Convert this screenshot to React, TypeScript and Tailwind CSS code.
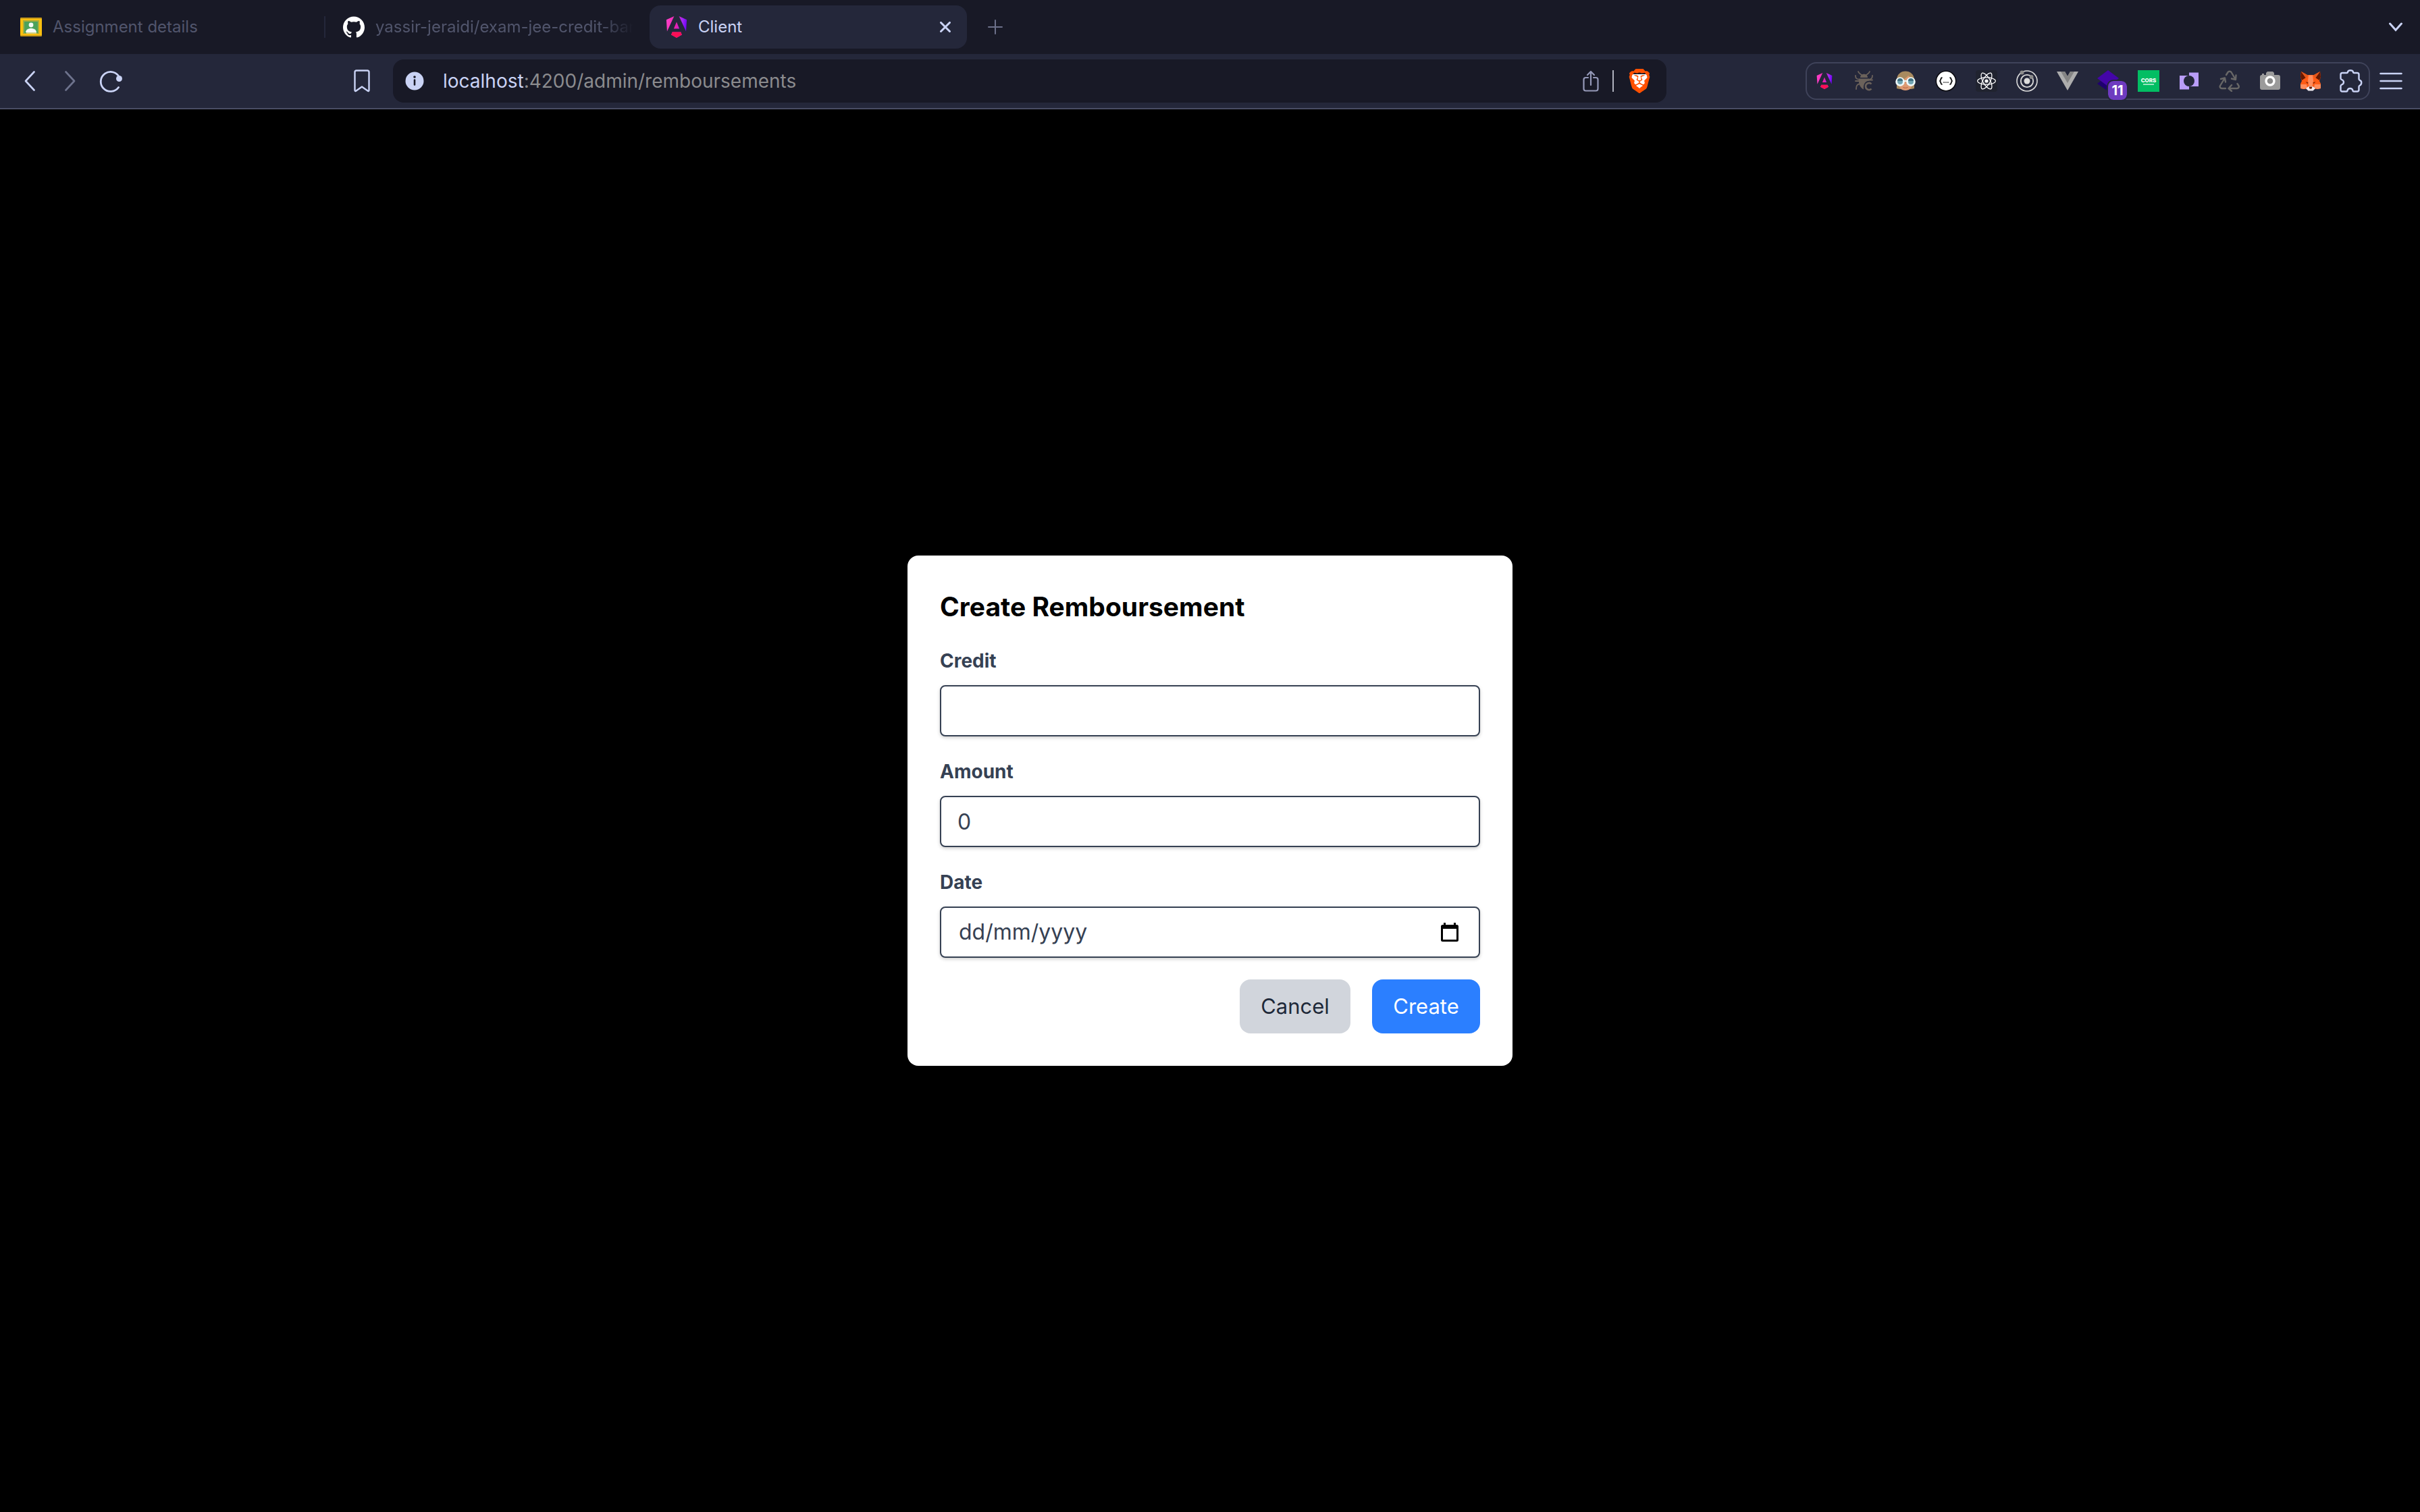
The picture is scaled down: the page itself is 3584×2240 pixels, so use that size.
import type { ReactNode } from "react";
import { SiBrave, SiGithub, SiReact } from "react-icons/si";

const ANGULAR_PATH =
  "M16.712 17.711H7.288l-1.204 2.916L12 24l5.916-3.373-1.204-2.916ZM14.692 0l7.832 16.855.814-12.856L14.692 0ZM9.308 0 .662 3.999l.814 12.856L9.308 0Zm-.405 13.93h6.198L12 6.396 8.903 13.93Z";

function AngularIcon({ id, className }: { id: string; className: string }) {
  return (
    <svg viewBox="0 0 24 24" className={className} aria-hidden="true">
      <defs>
        <linearGradient id={id} x1="0" y1="0.3" x2="1" y2="0.45">
          <stop offset="0" stopColor="#ff41c8" />
          <stop offset="0.5" stopColor="#e81fb0" />
          <stop offset="0.75" stopColor="#a32af5" />
          <stop offset="1" stopColor="#6a00f4" />
        </linearGradient>
      </defs>
      <path d={ANGULAR_PATH} fill={`url(#${id})`} />
      <path d="M16.712 17.711H7.288l-1.204 2.916L12 24l5.916-3.373-1.204-2.916Z" fill="#fb0f55" />
    </svg>
  );
}

function ClassroomIcon() {
  return (
    <svg viewBox="0 0 32 28" className="h-7 w-8 shrink-0" aria-hidden="true">
      <rect width="32" height="28" rx="1" fill="#c79a1a" />
      <rect y="2" width="32" height="24" fill="#fbc010" />
      <rect x="4" y="4" width="24" height="20" fill="#a9ad3c" />
      <rect x="6" y="6" width="20" height="17" fill="#4ca25c" />
      <circle cx="16" cy="11" r="3.4" fill="#f4faf5" />
      <path d="M8 22c0-4 4-6 8-6s8 2 8 6z" fill="#f4faf5" />
      <rect x="9" y="22" width="15" height="2" fill="#cfcf88" />
    </svg>
  );
}

function BugIcon() {
  return (
    <svg viewBox="0 0 32 32" className="size-8" fill="none" stroke="#6b625b" strokeWidth="1.8" strokeLinecap="round" aria-hidden="true">
      <path d="M6 2c1 3 3 3 5 5M23 2c-1 3-3 3-5 5" />
      <path d="M2 8c0 5 2 5 7 6M27 8c0 5-2 5-7 6M2 16h6M3 28c0-5 1-7 6-8M20 14.500h7" />
      <path d="M9 11c0-7 11-7 11 0z" fill="#6b625b" stroke="none" />
      <path d="M7 12.500h15l.5 3c-7 .5-9 6-8.500 13C9 26 6 20 7 12.500z" fill="#6b625b" stroke="none" />
      <path d="M25.500 20.500c-2.500-3-8.500-1.500-8.500 3.500s6 6.500 8.500 3.500" strokeWidth="2.600" strokeLinecap="butt" />
    </svg>
  );
}

function GogglesIcon() {
  return (
    <svg viewBox="0 0 32 32" className="size-8" aria-hidden="true">
      <path d="M3 27V15C3 6 9 1.500 16 1.500S29 6 29 15v12l-4 1H7z" fill="#a88a5f" />
      <path d="M6 16c6-1 11-4 14-8l6 5v7c0 6-4 10-10 10S6 26 6 20z" fill="#dc9a72" />
      <path d="M12 25c2 1 6 1 8 0-1 2-7 2-8 0z" fill="#b8502f" />
      <circle cx="8" cy="17" r="5.400" fill="#72a5b3" stroke="#ecf7f8" strokeWidth="2.800" />
      <circle cx="24" cy="17" r="5.400" fill="#72a5b3" stroke="#ecf7f8" strokeWidth="2.800" />
      <path d="M4 16a4 4 0 0 1 8 0zM20 16a4 4 0 0 1 8 0z" fill="#3f6f80" />
      <path d="M13 16h6" stroke="#ecf7f8" strokeWidth="2" />
    </svg>
  );
}

function BracesIcon() {
  return (
    <svg viewBox="0 0 32 32" className="size-8" fill="none" aria-hidden="true">
      <circle cx="16" cy="16" r="14.700" fill="#fff" stroke="#0b0b10" strokeWidth="1.600" />
      <path d="M10.500 11c-3 0-1.500 4.500-4 5 2.500.5 1 5 4 5M21.500 11c3 0 1.500 4.500 4 5-2.500.5-1 5-4 5" stroke="#111" strokeWidth="1.800" />
      <path d="M12.300 18h1.600M15.200 18h1.600M18.100 18h1.600" stroke="#111" strokeWidth="1.600" />
    </svg>
  );
}

function OrbitIcon() {
  return (
    <svg viewBox="0 0 32 32" className="size-8" fill="none" aria-hidden="true">
      <circle cx="16" cy="16" r="15" stroke="#dcdcdc" strokeWidth="1.600" />
      <circle cx="16" cy="16" r="9.200" stroke="#dcdcdc" strokeWidth="1.800" />
      <circle cx="16" cy="16" r="4.500" fill="#dcdcdc" />
      <circle cx="8.500" cy="3.500" r="3" fill="#8b8b8b" />
      <circle cx="22.500" cy="10" r="3" fill="#8b8b8b" />
    </svg>
  );
}

function VueIcon() {
  return (
    <svg viewBox="0 0 32 32" className="size-8" aria-hidden="true">
      <path d="M0 2h12l4 7 4-7h12L16 30z" fill="#adadad" />
      <path d="M6 2h6l4 7 4-7h6L16 19z" fill="#848484" />
    </svg>
  );
}

function LayersIcon() {
  return (
    <span className="relative block size-8">
      <svg viewBox="0 0 32 32" className="size-8" aria-hidden="true">
        <path d="M0 20l5-4 11 7v8z" fill="#1f0070" />
        <path d="M16 0l16 12-16 12L0 12z" fill="#4405a8" />
      </svg>
      <span className="absolute top-4 left-4 flex h-7 w-7 items-center justify-center rounded-lg bg-[#6e3bc0] text-[20px] leading-7 font-bold text-white outline-2 outline-[#24273a]">
        11
      </span>
    </span>
  );
}

function CorsIcon() {
  return (
    <span className="flex size-8 flex-col items-center justify-center bg-[#02be63] text-[8px] leading-2 font-extrabold text-white">
      CORS
      <span className="mt-px h-0.5 w-4 bg-white/60" />
    </span>
  );
}

function OverlapIcon() {
  return (
    <svg viewBox="0 0 32 32" className="size-8" aria-hidden="true">
      <path d="M2 8h14v20.500H2z" fill="#b99df8" />
      <path d="M16 3.500h14V24H16z" fill="#b99df8" />
      <circle cx="16" cy="16" r="8" fill="#24273a" />
    </svg>
  );
}

function RecycleIcon() {
  return (
    <svg viewBox="0 0 32 32" className="size-8" fill="none" stroke="#686767" strokeWidth="2.400" strokeLinecap="round" strokeLinejoin="round" aria-hidden="true">
      <path d="M11 7l2.500-4c1-1.600 4-1.600 5 0L25 14M25.500 7.500L25 14l-6-1.500" />
      <path d="M27.500 20l2 3c1 2-.5 4-2.500 4H14.500M19 22l-4.500 5 4.500 4" />
      <path d="M10 27H4.500c-2 0-3.500-2-2.500-4l7-11.500M3 13l6-1.500 1 6" />
    </svg>
  );
}

function CameraIcon() {
  return (
    <svg viewBox="0 0 32 32" className="size-8" aria-hidden="true">
      <path d="M4 5h3v2h3V4l2-2h8l2 2v3h6q3 0 3 3v16q0 3-3 3H4q-3 0-3-3V10q0-3 3-3z" fill="#9b9b9b" />
      <circle cx="16" cy="16" r="6" fill="#8a8a8a" stroke="#fff" strokeWidth="3.400" />
    </svg>
  );
}

function FoxIcon() {
  return (
    <svg viewBox="0 0 32 32" className="size-8" aria-hidden="true">
      <path d="M2 2l9 5h10l9-5 1 8-2 6 2 4v7l-6 1-6-1h-6l-6 1-6-1v-7l2-4-2-6z" fill="#ff5c16" />
      <path d="M2 2l7 9-6 4-2-5zM30 2l-7 9 6 4 2-5z" fill="#661800" />
      <path d="M2 2l10 5.500L9 12zM30 2L20 7.500l3 4.500z" fill="#e2571c" />
      <path d="M13 7.500h6l1 8-1.500 9h-5L12 15.500z" fill="#ff8d5d" />
      <path d="M1 21h9l1 5-5 2-5-1zM31 21h-9l-1 5 5 2 5-1z" fill="#ff8d5d" />
      <path d="M9 27l4-3h6l4 3-3.500 3.500h-7z" fill="#f3eff3" />
      <path d="M13.500 24.500h5l-1 3h-3z" fill="#661800" />
      <path d="M8.500 17l4 1.500-1 1.500zM23.500 17l-4 1.500 1 1.500z" fill="#661800" />
    </svg>
  );
}

function PuzzleIcon() {
  return (
    <svg viewBox="0 0 34 34" className="h-[34px] w-[34px] shrink-0" fill="none" stroke="#cad3f5" strokeWidth="2.400" strokeLinejoin="round" aria-hidden="true">
      <path d="M4 5h6.500c1 0 1.500-.5 1.500-1.500 1-3 7-3 8 0 0 1 .5 1.500 1.500 1.500H26q2.500 0 2.500 2.500V14c0 1 .5 1.500 1.500 2 3 1 3 6 0 7.500-1 .5-1.500 1-1.500 2V30q0 2.500-2.500 2.500h-5c-1 0-1.500-.5-1.500-1.500-1-4-7-4-8 0 0 1-.5 1.500-1.500 1.500H4Q1.500 32.500 1.500 30v-5.500c0-1 .5-1.500 1.500-2 4-1.500 4-6 0-7.500-1-.5-1.500-1-1.500-2V7.500Q1.500 5 4 5z" />
    </svg>
  );
}

const extensions: { name: string; icon: ReactNode }[] = [
  { name: "Angular DevTools", icon: <AngularIcon id="ng-ext" className="size-6" /> },
  { name: "Bug tracker", icon: <BugIcon /> },
  { name: "Goggles", icon: <GogglesIcon /> },
  { name: "JSON viewer", icon: <BracesIcon /> },
  { name: "React DevTools", icon: <SiReact className="size-8 rounded-sm bg-[#20232f] p-0.5 text-white" /> },
  { name: "Orbit", icon: <OrbitIcon /> },
  { name: "Vue DevTools", icon: <VueIcon /> },
  { name: "Layers", icon: <LayersIcon /> },
  { name: "CORS", icon: <CorsIcon /> },
  { name: "Overlap", icon: <OverlapIcon /> },
  { name: "Recycle", icon: <RecycleIcon /> },
  { name: "Screenshot", icon: <CameraIcon /> },
  { name: "Wallet", icon: <FoxIcon /> },
  { name: "Extensions", icon: <PuzzleIcon /> },
];

function IconButton({ label, children }: { label: string; children: ReactNode }) {
  return (
    <button type="button" aria-label={label} className="flex size-8 shrink-0 items-center justify-center">
      {children}
    </button>
  );
}

function TabStrip() {
  return (
    <div role="tablist" className="flex h-20 items-center bg-[#181926] text-[24px] leading-8 text-[#51556c]">
      <button type="button" role="tab" aria-selected="false" className="flex w-[480px] items-center gap-4 pl-[30px]">
        <ClassroomIcon />
        Assignment details
      </button>
      <div className="h-8 w-0.5 bg-[#24273a]" />
      <button type="button" role="tab" aria-selected="false" className="flex w-[480px] items-center gap-4 pr-2 pl-[26px]">
        <SiGithub className="size-8 shrink-0 text-white" />
        <span className="flex-1 mask-r-from-84% mask-r-to-96% text-left whitespace-nowrap">
          yassir-jeraidi/exam-jee-credit-ban
        </span>
      </button>
      <div className="flex h-16 w-[470px] items-center rounded-2xl bg-[#24273a] pr-6 pl-6 text-[#cad3f5]">
        <button type="button" role="tab" aria-selected="true" className="flex flex-1 items-center gap-4">
          <AngularIcon id="ng-tab" className="size-8" />
          Client
        </button>
        <button type="button" aria-label="Close tab">
          <svg viewBox="0 0 16 16" className="size-4" stroke="#cad3f5" strokeWidth="3" strokeLinecap="round" aria-hidden="true">
            <path d="M1.500 1.500l13 13M14.500 1.500l-13 13" />
          </svg>
        </button>
      </div>
      <button type="button" aria-label="New tab" className="ml-[31px]">
        <svg viewBox="0 0 22 22" className="size-[22px]" stroke="#6c708a" strokeWidth="2" strokeLinecap="round" aria-hidden="true">
          <path d="M11 1v20M1 11h20" />
        </svg>
      </button>
      <button type="button" aria-label="Search tabs" className="mr-[26px] ml-auto">
        <svg viewBox="0 0 20 14" className="h-3.5 w-5" fill="none" stroke="#cad3f5" strokeWidth="3" strokeLinecap="round" aria-hidden="true">
          <path d="M1.500 2L10 11.500 18.500 2" />
        </svg>
      </button>
    </div>
  );
}

function Toolbar() {
  return (
    <div className="flex h-[82px] items-center border-b-2 border-[#494d64] bg-[#24273a] pr-[26px] pl-7">
      <div className="flex gap-7">
        <IconButton label="Back">
          <svg viewBox="0 0 16 32" className="h-8 w-4" fill="none" stroke="#cad3f5" strokeWidth="2.600" strokeLinecap="round" strokeLinejoin="round" aria-hidden="true">
            <path d="M14.500 2.500L2 16l12.500 13.500" />
          </svg>
        </IconButton>
        <IconButton label="Forward">
          <svg viewBox="0 0 16 32" className="h-8 w-4" fill="none" stroke="#6e738d" strokeWidth="2.600" strokeLinecap="round" strokeLinejoin="round" aria-hidden="true">
            <path d="M1.500 2.500L14 16 1.500 29.500" />
          </svg>
        </IconButton>
        <IconButton label="Reload">
          <svg viewBox="0 0 34 34" className="h-[34px] w-[34px] shrink-0" fill="none" stroke="#cad3f5" strokeWidth="2.800" strokeLinecap="round" aria-hidden="true">
            <path d="M28.500 26.500A14.500 14.500 0 1 1 30 12" />
            <circle cx="29.500" cy="13.500" r="4.500" fill="#cad3f5" stroke="none" />
          </svg>
        </IconButton>
      </div>
      <div className="ml-[340px] flex">
        <IconButton label="Bookmark this page">
          <svg viewBox="0 0 24 34" className="h-[34px] w-6" fill="none" stroke="#cad3f5" strokeWidth="2.400" strokeLinejoin="round" aria-hidden="true">
            <path d="M4 1.500h16q2.500 0 2.500 2.500v26.500c0 1.500-1 2-2 1L12 25.500 3.500 31.500c-1 1-2 .5-2-1V4q0-2.500 2.500-2.500z" />
          </svg>
        </IconButton>
      </div>
      <div className="mr-[206px] ml-[30px] flex h-16 min-w-0 flex-1 items-center rounded-2xl bg-[#181926] pr-[22px] pl-[18px]">
        <button type="button" aria-label="Site information" className="shrink-0">
          <svg viewBox="0 0 28 28" className="size-7" aria-hidden="true">
            <circle cx="14" cy="14" r="13.500" fill="#cad3f5" />
            <circle cx="14" cy="8" r="1.800" fill="#181926" />
            <path d="M14 12.500v7" stroke="#181926" strokeWidth="2.600" strokeLinecap="round" />
          </svg>
        </button>
        <div className="ml-7 flex-1 text-[28px] leading-10 text-[#8b8b8e]">
          <span className="text-[#cad3f5]">localhost</span>:4200/admin/remboursements
        </div>
        <button type="button" aria-label="Share this page">
          <svg viewBox="0 0 24 32" className="h-8 w-6" fill="none" stroke="#9599b8" strokeWidth="2.200" strokeLinecap="round" strokeLinejoin="round" aria-hidden="true">
            <path d="M8 11H4.500q-3 0-3 3v13.500q0 3 3 3h15q3 0 3-3V14q0-3-3-3H16M12 22V2M7 7l5-5 5 5" />
          </svg>
        </button>
        <div className="ml-5 h-8 w-0.5 bg-[#b0b3bf]" />
        <button type="button" aria-label="Brave Shields" className="relative ml-5">
          <svg viewBox="0 0 36 36" className="absolute inset-0 size-9" aria-hidden="true">
            <path d="M7 8h22l1 6-4 12-8 5-8-5-4-12z" fill="#fff" />
          </svg>
          <SiBrave className="relative size-9 text-[#ff5000]" />
        </button>
      </div>
      <div className="flex h-14 items-center gap-7 rounded-2xl border-2 border-[#3f435a] px-2.5">
        {extensions.map((e) => (
          <IconButton key={e.name} label={e.name}>
            {e.icon}
          </IconButton>
        ))}
      </div>
      <button type="button" aria-label="Menu" className="ml-[14px]">
        <svg viewBox="0 0 34 28" className="h-7 w-[34px]" stroke="#cad3f5" strokeWidth="2.600" strokeLinecap="round" aria-hidden="true">
          <path d="M1.500 3h31M1.500 14h31M1.500 25h31" />
        </svg>
      </button>
    </div>
  );
}

const labelClass = "block text-[28px] leading-10 font-bold text-[#364153]";
const fieldClass =
  "block h-19 w-full rounded-lg border-2 border-[#364153] bg-white px-6 text-[32px] leading-10 text-[#364153] shadow-[0_2px_6px_rgba(0,0,0,0.1),0_2px_4px_rgba(0,0,0,0.1)]";

function CreateDialog() {
  return (
    <form
      role="dialog"
      aria-labelledby="dialog-title"
      className="w-full max-w-4xl rounded-2xl bg-white p-12"
      onSubmit={(e) => e.preventDefault()}
    >
      <h2 id="dialog-title" className="mb-8 text-[39px] leading-14 font-bold text-black">
        Create Remboursement
      </h2>
      <div className="flex flex-col gap-8">
        <div className="flex flex-col gap-4">
          <label htmlFor="credit" className={labelClass}>Credit</label>
          <input id="credit" type="text" className={fieldClass} />
        </div>
        <div className="flex flex-col gap-4">
          <label htmlFor="amount" className={labelClass}>Amount</label>
          <input id="amount" type="text" inputMode="numeric" defaultValue="0" className={fieldClass} />
        </div>
        <div className="flex flex-col gap-4">
          <label htmlFor="date" className={labelClass}>Date</label>
          <div className="flex h-19 items-center rounded-lg border-2 border-[#364153] bg-white pr-[30px] pl-[26px] shadow-[0_2px_6px_rgba(0,0,0,0.1),0_2px_4px_rgba(0,0,0,0.1)]">
            <input
              id="date"
              type="text"
              placeholder="dd/mm/yyyy"
              className="min-w-0 flex-1 text-[32px] leading-10 text-[#364153] outline-none placeholder:text-[#364153]"
            />
            <button type="button" aria-label="Open calendar">
              <svg viewBox="0 0 26 28" className="h-7 w-[26px]" aria-hidden="true">
                <path d="M4 0h3v3h12V0h3v3h1.500Q26 3 26 5.500v20q0 2.500-2.500 2.500h-21Q0 28 0 25.500v-20Q0 3 2.500 3H4zM3 9v16h20V9z" fill="#000" fillRule="evenodd" />
              </svg>
            </button>
          </div>
        </div>
      </div>
      <div className="mt-8 flex justify-end gap-8 text-[31px] leading-12">
        <button type="button" className="w-[164px] rounded-2xl bg-[#d1d5dc] py-4 text-center text-[#1e2939]">
          Cancel
        </button>
        <button type="submit" className="w-40 rounded-2xl bg-[#2b7fff] py-4 text-center text-white">
          Create
        </button>
      </div>
    </form>
  );
}

export default function App() {
  return (
    <div className="flex min-h-screen flex-col bg-black font-['Inter',sans-serif]">
      <header>
        <TabStrip />
        <Toolbar />
      </header>
      <main className="flex flex-1 items-center justify-center">
        <CreateDialog />
      </main>
    </div>
  );
}
